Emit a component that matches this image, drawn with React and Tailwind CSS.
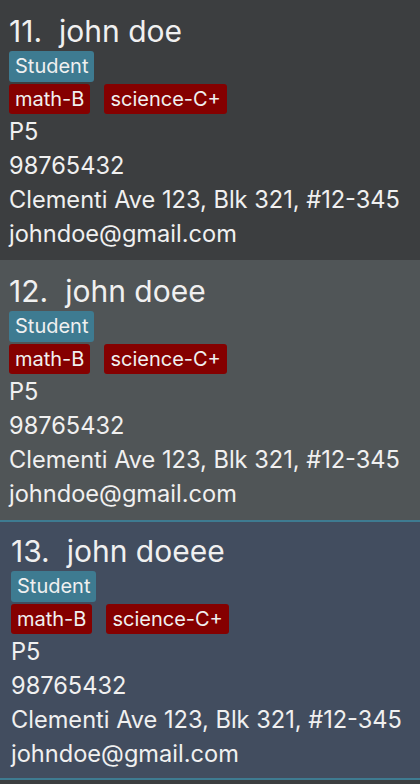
import React from "react";

const people = [
  { idx: 11, name: "john doe", bg: "bg-[#3c3e40]", sel: false },
  { idx: 12, name: "john doee", bg: "bg-[#505557]", sel: false },
  { idx: 13, name: "john doeee", bg: "bg-[#424d5f]", sel: true },
];

function Card({ p }) {
  return (
    <div
      className={`${p.bg} h-[260px] ${p.sel ? "border-y-2 border-[#3e7b91] pl-[11px] pt-[0px]" : "pl-[9px] pt-[2px]"} text-[#f0f0f0]`}
    >
      <div className="flex text-[30px] leading-[36px] pt-[11px] h-[49px]">
        <span>{p.idx}.</span>
        <span className="ml-[17px]">{p.name}</span>
      </div>
      <div className="flex">
        <span className="bg-[#3e7b91] rounded-[3px] px-[6px] text-[20px] leading-[31px] h-[31px]">Student</span>
      </div>
      <div className="flex gap-[14px] mt-[2px]">
        <span className="bg-[#850000] rounded-[3px] px-[6px] text-[20px] leading-[30px] h-[30px]">math-B</span>
        <span className="bg-[#850000] rounded-[3px] px-[6px] text-[20px] leading-[30px] h-[30px]">science-C+</span>
      </div>
      <div className="text-[23.6px] leading-[34px] mt-[1px]">
        <div>P5</div>
        <div>98765432</div>
        <div>Clementi Ave 123, Blk 321, #12-345</div>
        <div>johndoe@gmail.com</div>
      </div>
    </div>
  );
}

export default function App() {
  return (
    <div className="w-[420px] h-[784px] overflow-hidden bg-[#3c3e40]" style={{ fontFamily: "Inter, 'Noto Sans', sans-serif" }}>
      {people.map((p) => (
        <Card key={p.idx} p={p} />
      ))}
    </div>
  );
}
